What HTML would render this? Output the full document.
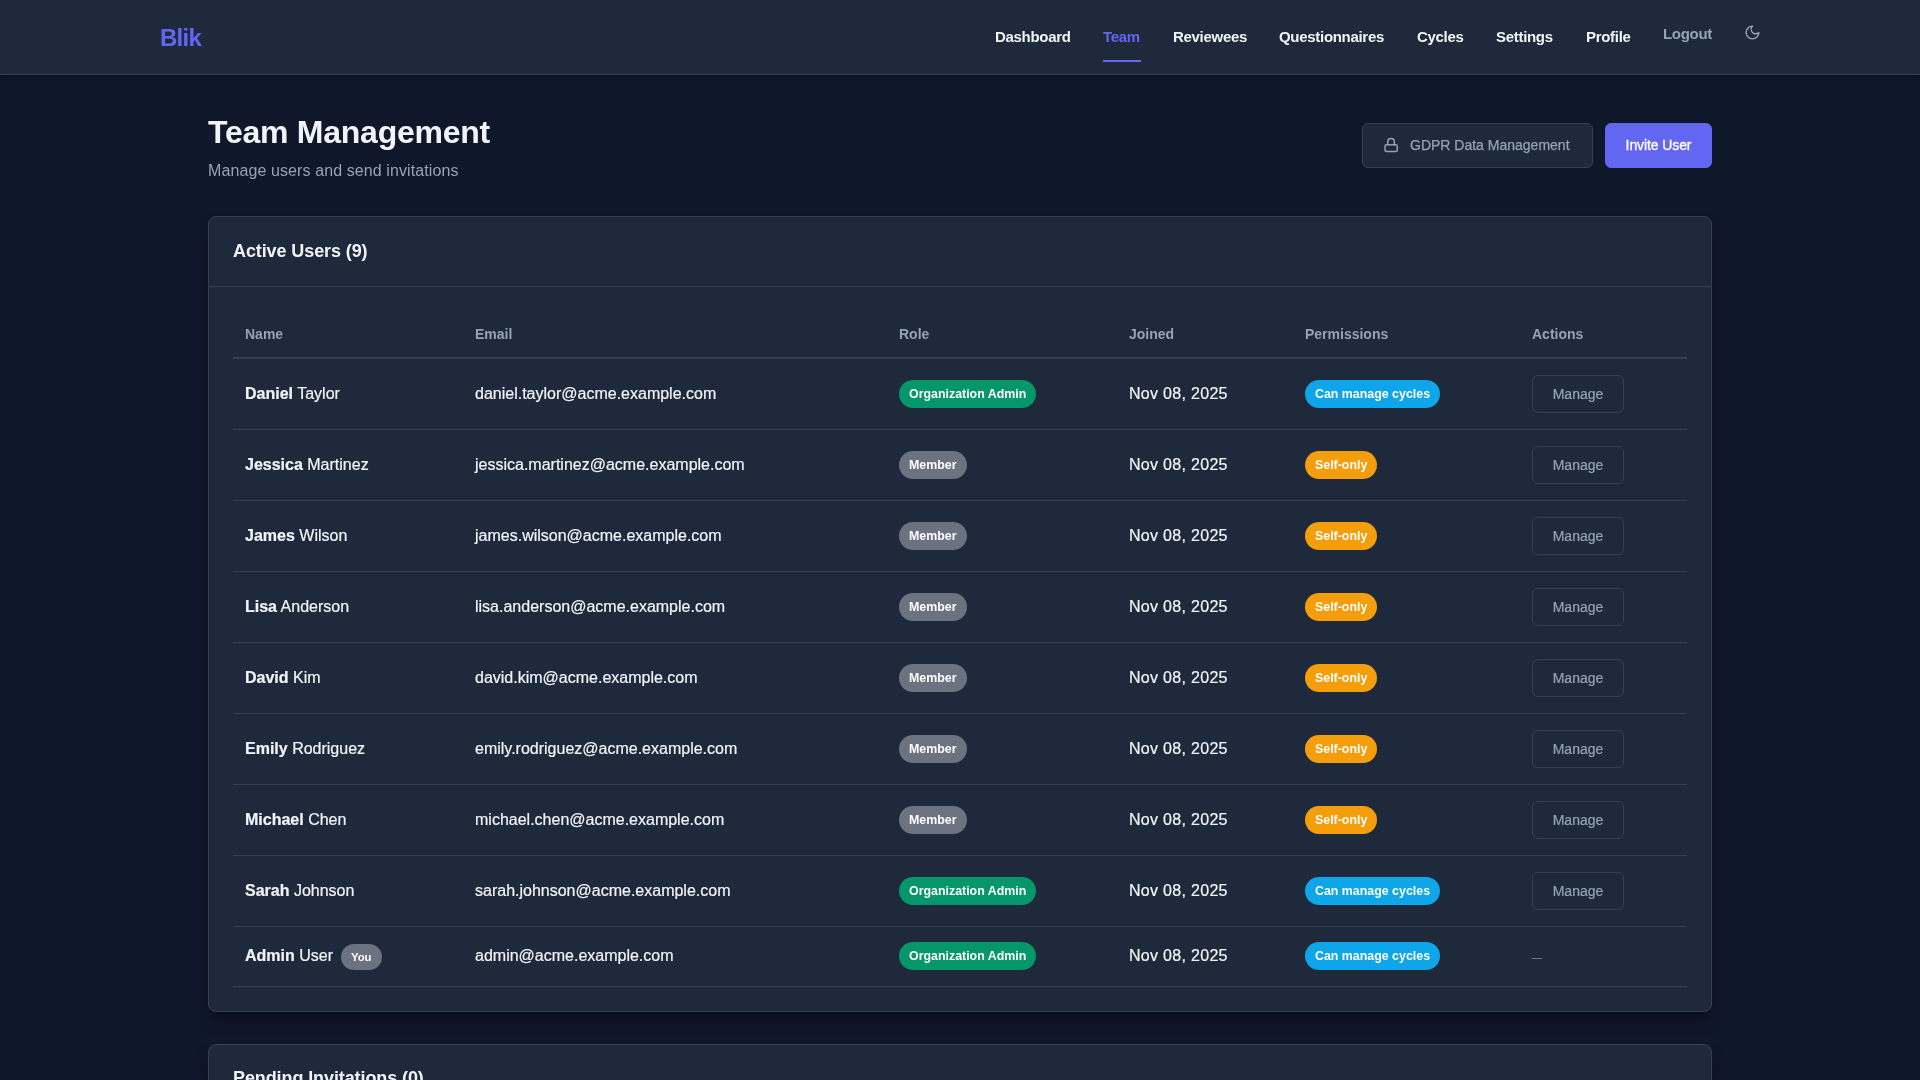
<!DOCTYPE html>
<html>
<head>
<meta charset="utf-8">
<style>
*{box-sizing:border-box;margin:0;padding:0}
.nav,h1,.sub,.btn,.card{will-change:transform}
html,body{width:1920px;height:1080px;overflow:hidden;background:#0f172a;font-family:"Liberation Sans",sans-serif;color:#f1f5f9}
.nav{position:absolute;left:0;top:0;width:1920px;height:75px;background:#1e293b;border-bottom:1px solid #334155;box-shadow:0 1px 3px rgba(0,0,0,.5)}
.logo{position:absolute;left:160px;top:23px;font-size:24px;font-weight:bold;color:#6366f1;line-height:30px;letter-spacing:-0.75px}
.nl{position:absolute;top:27px;font-size:15px;font-weight:bold;color:#f1f5f9;line-height:20px;white-space:nowrap;letter-spacing:-0.3px}
.nl.active{color:#6366f1}
.uline{position:absolute;left:1103px;top:60px;width:38px;height:2px;background:#6366f1}
.logout{color:#94a3b8}
.moon{position:absolute;left:1743.5px;top:23.5px;width:17px;height:17px}
h1{position:absolute;left:208px;top:113px;font-size:32px;letter-spacing:-0.25px;font-weight:bold;line-height:38px;color:#f1f5f9;white-space:nowrap}
.sub{position:absolute;left:208px;top:161px;font-size:16px;letter-spacing:0.1px;line-height:20px;color:#94a3b8;white-space:nowrap}
.btn{position:absolute;top:123px;height:45px;border-radius:6px;font-size:14px;line-height:43px;white-space:nowrap}
.gdpr{left:1362px;width:231px;background:#1e293b;border:1px solid #334155;color:#94a3b8}
.gdpr svg{position:absolute;left:17px;top:10px;width:22px;height:22px}
.gdpr span{position:absolute;left:47px;top:0;-webkit-text-stroke:0.25px #94a3b8}
.invite{left:1605px;width:107px;background:#6366f1;color:#fff;border:1px solid #6366f1;text-align:center;font-weight:normal;letter-spacing:-0.1px;-webkit-text-stroke:0.35px #fff}
.card{position:absolute;left:208px;width:1504px;background:#1e293b;border:1px solid #334155;border-radius:8px;box-shadow:0 10px 15px -3px rgba(0,0,0,.35),0 4px 6px -4px rgba(0,0,0,.35)}
.card1{top:216px;height:796px}
.card2{top:1044px;height:200px}
.ch{position:absolute;left:0;top:0;width:100%;height:70px;border-bottom:1px solid #334155}
.ch h2{position:absolute;left:24px;top:23px;letter-spacing:-0.1px;font-size:18px;line-height:22px;font-weight:bold;color:#f1f5f9;white-space:nowrap}
.tbl{position:absolute;left:24px;top:70px;width:1454px}
.row{position:absolute;left:0;width:1454px;border-bottom:1px solid #334155}
.hdr{top:0;height:72px;border-bottom:2px solid #334155}
.cell{position:absolute;white-space:nowrap}
.dt{letter-spacing:0.3px}
.th{font-size:14px;font-weight:bold;color:#94a3b8;line-height:18px;top:38px}
.td{font-size:16px;line-height:20px;color:#f1f5f9;-webkit-text-stroke:0.2px #f1f5f9}
.badge{position:absolute;height:28px;border-radius:14px;font-size:12.4px;font-weight:bold;color:#fff;line-height:28px;padding:0 10px;white-space:nowrap}
.g{background:#059669}.m{background:#6b7280}.s{background:#0ea5e9}.a{background:#f59e0b}
.mg{position:absolute;width:92px;height:38px;border:1px solid #334155;border-radius:6px;font-size:14px;color:#94a3b8;line-height:36px;text-align:center;-webkit-text-stroke:0.2px #94a3b8}
.row .td{top:25px}
.row .bd{top:21px}
.row .mg{top:16px}
.row.last .td{top:19px}
.row.last .bd{top:15px}
.you{position:absolute;left:108px;top:17px;height:26px;line-height:26px;padding:0 10px;border-radius:13px;background:#6b7280;color:#fff;font-size:11.3px;font-weight:bold;white-space:nowrap}
.dash{top:31px;width:10px;height:1px;background:#64748b}
</style>
</head>
<body>
<div class="nav">
  <div class="logo">Blik</div>
  <div class="nl" style="left:995px">Dashboard</div>
  <div class="nl active" style="left:1103px">Team</div>
  <div class="uline"></div>
  <div class="nl" style="left:1173px">Reviewees</div>
  <div class="nl" style="left:1279px">Questionnaires</div>
  <div class="nl" style="left:1417px">Cycles</div>
  <div class="nl" style="left:1496px">Settings</div>
  <div class="nl" style="left:1586px">Profile</div>
  <div class="nl logout" style="left:1663px;top:24px">Logout</div>
  <svg class="moon" viewBox="0 0 24 24" fill="none" stroke="#94a3b8" stroke-width="2" stroke-linecap="round" stroke-linejoin="round"><path d="M12 3a6 6 0 0 0 9 9 9 9 0 1 1-9-9Z"/></svg>
</div>

<h1>Team Management</h1>
<div class="sub">Manage users and send invitations</div>
<div class="btn gdpr"><svg viewBox="0 0 22 22" fill="none" stroke="#94a3b8" stroke-width="1.5" stroke-linecap="round" stroke-linejoin="round"><rect x="5" y="10.8" width="12.2" height="6.6" rx="1.5"/><path d="M7.75 10.8V7.75a3.3 3.3 0 0 1 6.6 0V10.8"/></svg><span>GDPR Data Management</span></div>
<div class="btn invite">Invite User</div>

<div class="card card1">
  <div class="ch"><h2>Active Users (9)</h2></div>
  <div class="tbl" id="tbl">
<div class="row hdr"><div class="cell th" style="left:12px">Name</div><div class="cell th" style="left:242px">Email</div><div class="cell th" style="left:666px">Role</div><div class="cell th" style="left:896px">Joined</div><div class="cell th" style="left:1072px">Permissions</div><div class="cell th" style="left:1299px">Actions</div></div>
<div class="row" style="top:72px;height:71px"><div class="cell td nm" style="left:12px"><b>Daniel</b> Taylor</div><div class="cell td em" style="left:242px">daniel.taylor@acme.example.com</div><div class="badge bd g" style="left:666px">Organization Admin</div><div class="cell td dt"  style="left:896px">Nov 08, 2025</div><div class="badge bd s" style="left:1072px">Can manage cycles</div><div class="mg" style="left:1299px">Manage</div></div>
<div class="row" style="top:143px;height:71px"><div class="cell td nm" style="left:12px"><b>Jessica</b> Martinez</div><div class="cell td em" style="left:242px">jessica.martinez@acme.example.com</div><div class="badge bd m" style="left:666px">Member</div><div class="cell td dt"  style="left:896px">Nov 08, 2025</div><div class="badge bd a" style="left:1072px">Self-only</div><div class="mg" style="left:1299px">Manage</div></div>
<div class="row" style="top:214px;height:71px"><div class="cell td nm" style="left:12px"><b>James</b> Wilson</div><div class="cell td em" style="left:242px">james.wilson@acme.example.com</div><div class="badge bd m" style="left:666px">Member</div><div class="cell td dt"  style="left:896px">Nov 08, 2025</div><div class="badge bd a" style="left:1072px">Self-only</div><div class="mg" style="left:1299px">Manage</div></div>
<div class="row" style="top:285px;height:71px"><div class="cell td nm" style="left:12px"><b>Lisa</b> Anderson</div><div class="cell td em" style="left:242px">lisa.anderson@acme.example.com</div><div class="badge bd m" style="left:666px">Member</div><div class="cell td dt"  style="left:896px">Nov 08, 2025</div><div class="badge bd a" style="left:1072px">Self-only</div><div class="mg" style="left:1299px">Manage</div></div>
<div class="row" style="top:356px;height:71px"><div class="cell td nm" style="left:12px"><b>David</b> Kim</div><div class="cell td em" style="left:242px">david.kim@acme.example.com</div><div class="badge bd m" style="left:666px">Member</div><div class="cell td dt"  style="left:896px">Nov 08, 2025</div><div class="badge bd a" style="left:1072px">Self-only</div><div class="mg" style="left:1299px">Manage</div></div>
<div class="row" style="top:427px;height:71px"><div class="cell td nm" style="left:12px"><b>Emily</b> Rodriguez</div><div class="cell td em" style="left:242px">emily.rodriguez@acme.example.com</div><div class="badge bd m" style="left:666px">Member</div><div class="cell td dt"  style="left:896px">Nov 08, 2025</div><div class="badge bd a" style="left:1072px">Self-only</div><div class="mg" style="left:1299px">Manage</div></div>
<div class="row" style="top:498px;height:71px"><div class="cell td nm" style="left:12px"><b>Michael</b> Chen</div><div class="cell td em" style="left:242px">michael.chen@acme.example.com</div><div class="badge bd m" style="left:666px">Member</div><div class="cell td dt"  style="left:896px">Nov 08, 2025</div><div class="badge bd a" style="left:1072px">Self-only</div><div class="mg" style="left:1299px">Manage</div></div>
<div class="row" style="top:569px;height:71px"><div class="cell td nm" style="left:12px"><b>Sarah</b> Johnson</div><div class="cell td em" style="left:242px">sarah.johnson@acme.example.com</div><div class="badge bd g" style="left:666px">Organization Admin</div><div class="cell td dt"  style="left:896px">Nov 08, 2025</div><div class="badge bd s" style="left:1072px">Can manage cycles</div><div class="mg" style="left:1299px">Manage</div></div>
<div class="row last" style="top:640px;height:60px"><div class="cell td nm" style="left:12px"><b>Admin</b> User</div><div class="you">You</div><div class="cell td em" style="left:242px">admin@acme.example.com</div><div class="badge bd g" style="left:666px">Organization Admin</div><div class="cell td dt"  style="left:896px">Nov 08, 2025</div><div class="badge bd s" style="left:1072px">Can manage cycles</div><div class="cell dash" style="left:1299px"></div></div>
</div>
</div>
<div class="card card2">
  <div class="ch" style="border-bottom:none"><h2 style="top:22px">Pending Invitations (0)</h2></div>
</div>
</body>
</html>
